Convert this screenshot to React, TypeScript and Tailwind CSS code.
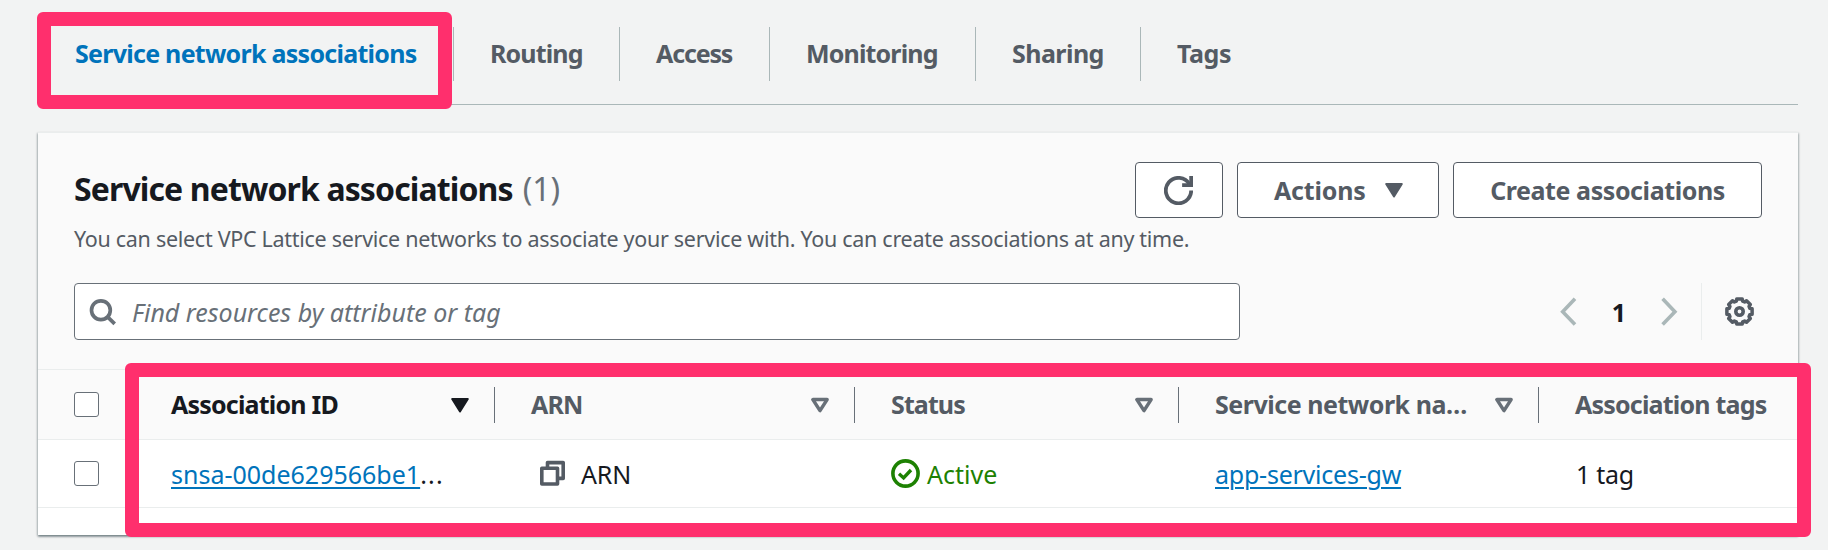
import React from "react";

const FONT = "font-['Noto_Sans','Open_Sans',sans-serif]";

const gearPath = (() => {
  const points: string[] = [];
  const steps: [number, number][] = [
    [-12, 12.9],
    [12, 12.9],
    [17, 10.8],
    [28, 10.8],
  ];
  for (let i = 0; i < 8; i++) {
    for (const [offset, radius] of steps) {
      const a = ((i * 45 + offset - 90) * Math.PI) / 180;
      points.push(`${(14.5 + radius * Math.cos(a)).toFixed(2)} ${(14.5 + radius * Math.sin(a)).toFixed(2)}`);
    }
  }
  return `M${points.join("L")}Z`;
})();

function RefreshIcon() {
  return (
    <svg className="mr-[2px] size-[29px]" viewBox="0 0 16 16" fill="none" stroke="#545b64" strokeWidth="2.1">
      <path d="M15 8a7 7 0 1 1-.9-3.4" />
      <path d="M10 5h5V0" />
    </svg>
  );
}

function SearchIcon() {
  return (
    <svg className="size-[29px] shrink-0" viewBox="0 0 29 29" fill="none" stroke="#687078" strokeWidth="3.7">
      <circle cx="12.9" cy="13.2" r="9.4" />
      <path d="M19.3 19.6l7.4 7.2" />
    </svg>
  );
}

function GearIcon() {
  return (
    <svg className="size-[29px]" viewBox="0 0 29 29" fill="none" stroke="#545b64" strokeWidth="3.5" strokeLinejoin="round">
      <path d={gearPath} />
      <circle cx="14.5" cy="14.5" r="3.7" strokeWidth="3.6" />
    </svg>
  );
}

function Chevron({ right = false }: { right?: boolean }) {
  return (
    <svg className="h-[29px] w-[17px]" viewBox="0 0 17 29" fill="none" stroke="#aab7b8" strokeWidth="3.6">
      <path d={right ? "M1.6 1.8L13.9 14.8L1.6 27.6" : "M15 1.8L2.7 14.8L15 27.6"} />
    </svg>
  );
}

function CopyIcon() {
  return (
    <svg className="size-[29px]" viewBox="0 0 29 29" fill="none" stroke="#545b64" strokeWidth="3.6" strokeLinejoin="round">
      <rect x="3.8" y="9.2" width="15.7" height="15.8" />
      <path d="M9.5 9V3.6H25.2V19.4H20" />
    </svg>
  );
}

function StatusIcon() {
  return (
    <svg className="size-[29px]" viewBox="0 0 29 29" fill="none" stroke="#1d8102" strokeWidth="3.6">
      <circle cx="14.5" cy="14.5" r="12.6" />
      <path d="M8 14.8L12.6 18.9L20 11" strokeWidth="3.4" />
    </svg>
  );
}

function Caret({ color, filled = false }: { color: string; filled?: boolean }) {
  return (
    <svg className="h-4 w-[18px] shrink-0" viewBox="0 0 18 16" fill={filled ? color : "none"} stroke={color} strokeWidth={filled ? 2 : 3.5} strokeLinejoin="round">
      <path d={filled ? "M1.2 2H16.8L9 14.4Z" : "M1.9 2.6H16.1L9 13.6Z"} />
    </svg>
  );
}

function Checkbox() {
  return <span className="block size-[25px] rounded-[3px] border-[1.5px] border-[#687078] bg-white" />;
}

const tabs = [
  { label: "Routing", width: "w-[166px]", tracking: "tracking-[-0.85px]" },
  { label: "Access", width: "w-[150px]", tracking: "tracking-[-1.15px]" },
  { label: "Monitoring", width: "w-[206px]", tracking: "tracking-[-0.85px]" },
  { label: "Sharing", width: "w-[165px]", tracking: "tracking-[-0.55px]" },
  { label: "Tags", width: "w-[130px]", tracking: "tracking-[-0.4px]" },
];

const columns = [
  { label: "Association ID", tracking: "tracking-[-0.8px]", pad: "pl-[37px]", sorted: true },
  { label: "ARN", tracking: "tracking-[-0.9px]", pad: "pl-9" },
  { label: "Status", tracking: "tracking-[-0.9px]", pad: "pl-9" },
  { label: "Service network na…", tracking: "tracking-[-0.47px]", pad: "pl-9" },
  { label: "Association tags", tracking: "tracking-[-0.8px]", pad: "pl-9", last: true },
];

const GRID = "grid grid-cols-[96px_361px_360px_324px_360px_259px]";

export default function App() {
  return (
    <div className={`relative h-[550px] w-[1828px] overflow-hidden bg-[#f2f3f3] text-[25px] leading-8 whitespace-nowrap text-[#16191f] ${FONT}`}>
      <nav className="ml-[38px] flex h-[105px] w-[1760px] border-b border-[#aab7b8] pt-[27px] font-bold text-[#545b64]">
        <div className="flex h-[54px] w-[416px] items-center border-r border-[#aab7b8] pb-[2px] pl-[37px] tracking-[-0.73px] text-[#0073bb]">
          Service network associations
        </div>
        {tabs.map((tab, i) => (
          <div
            key={tab.label}
            className={`flex h-[54px] items-center border-[#aab7b8] pb-[2px] pl-9 ${tab.width} ${tab.tracking} ${i < tabs.length - 1 ? "border-r" : ""}`}
          >
            {tab.label}
          </div>
        ))}
      </nav>

      <section className="mt-[27px] ml-[38px] h-[403px] w-[1760px] border-t border-[#eaeded] bg-white shadow-[0_2px_2px_rgba(0,28,36,0.3),1px_1px_2px_rgba(0,28,36,0.2),-1px_1px_2px_rgba(0,28,36,0.2)]">
        <div className="h-[236px] bg-[#fafafa] pl-9">
          <div className="flex h-[85px] pt-[29px]">
            <h1 className="flex w-[1061px] items-center pb-[3px] text-[32px] leading-10 font-bold tracking-[-0.88px]">
              Service network associations
              <span className="ml-2.5 font-normal tracking-normal text-[#687078]">(1)</span>
            </h1>
            <div className="flex h-[56px] gap-[14px] font-bold text-[#545b64]">
              <button className="flex w-[88px] items-center justify-center rounded-[4px] border-[1.5px] border-[#545b64] bg-white">
                <RefreshIcon />
              </button>
              <button className="flex w-[202px] items-center rounded-[4px] border-[1.5px] border-[#545b64] bg-white pl-9 tracking-[-0.2px]">
                <span className="mr-[19px]">Actions</span>
                <Caret color="#545b64" filled />
              </button>
              <button className="w-[309px] rounded-[4px] border-[1.5px] border-[#545b64] bg-white tracking-[-0.42px]">
                Create associations
              </button>
            </div>
          </div>
          <p className="h-[65px] pt-[4px] text-[21.5px] leading-[34px] tracking-[-0.29px] text-[#545b64]">
            You can select VPC Lattice service networks to associate your service with. You can create associations at any time.
          </p>
          <div className="flex h-[57px] items-center">
            <div className="flex h-[57px] w-[1166px] items-center rounded-[4px] border-[1.5px] border-[#687078] bg-white pl-[13px] text-[#687078]">
              <SearchIcon />
              <span className="ml-[15px] italic">Find resources by attribute or tag</span>
            </div>
            <div className="ml-[320px] flex h-[57px] items-center">
              <Chevron />
              <span className="w-[84px] text-center font-bold">1</span>
              <Chevron right />
              <span className="ml-[23px] h-[57px] w-px bg-[#eaeded]" />
              <span className="ml-[23px]">
                <GearIcon />
              </span>
            </div>
          </div>
        </div>

        <div className={`${GRID} h-[71px] items-center border-y border-[#eaeded] bg-[#fafafa] font-bold text-[#545b64]`}>
          <div className="pl-9">
            <Checkbox />
          </div>
          {columns.map((c) => (
            <div
              key={c.label}
              className={`flex h-9 items-center justify-between ${c.pad} ${c.tracking} ${c.last ? "" : "border-r border-[#687078] pr-[25px]"} ${c.sorted ? "text-[#16191f]" : ""}`}
            >
              <span className="pb-[2px]">{c.label}</span>
              {!c.last && <Caret color={c.sorted ? "#16191f" : "#687078"} filled={c.sorted} />}
            </div>
          ))}
        </div>

        <div className={`${GRID} h-[68px] items-center border-b border-[#eaeded]`}>
          <div className="pl-9">
            <Checkbox />
          </div>
          <div className="pl-[37px]">
            <a className="text-[#0073bb] underline decoration-2 underline-offset-[3px]">snsa-00de629566be1</a>
            <span className="tracking-[1.2px]">...</span>
          </div>
          <div className="flex items-center gap-[14px] pl-[43px]">
            <CopyIcon />
            <span className="tracking-[-0.2px]">ARN</span>
          </div>
          <div className="flex items-center gap-[7px] pl-9 text-[#1d8102]">
            <StatusIcon />
            Active
          </div>
          <div className="pl-9 tracking-[-0.23px]">
            <a className="text-[#0073bb] underline decoration-2 underline-offset-[3px]">app-services-gw</a>
          </div>
          <div className="pl-[37px] tracking-[-0.3px]">1 tag</div>
        </div>
      </section>

      <div className="absolute top-3 left-[37px] h-[97px] w-[415px] rounded-[6px] border-[14px] border-[#ff2f6d]" />
      <div className="absolute top-[363px] left-[125px] h-[174px] w-[1686px] rounded-[6px] border-[14px] border-[#ff2f6d]" />
    </div>
  );
}
